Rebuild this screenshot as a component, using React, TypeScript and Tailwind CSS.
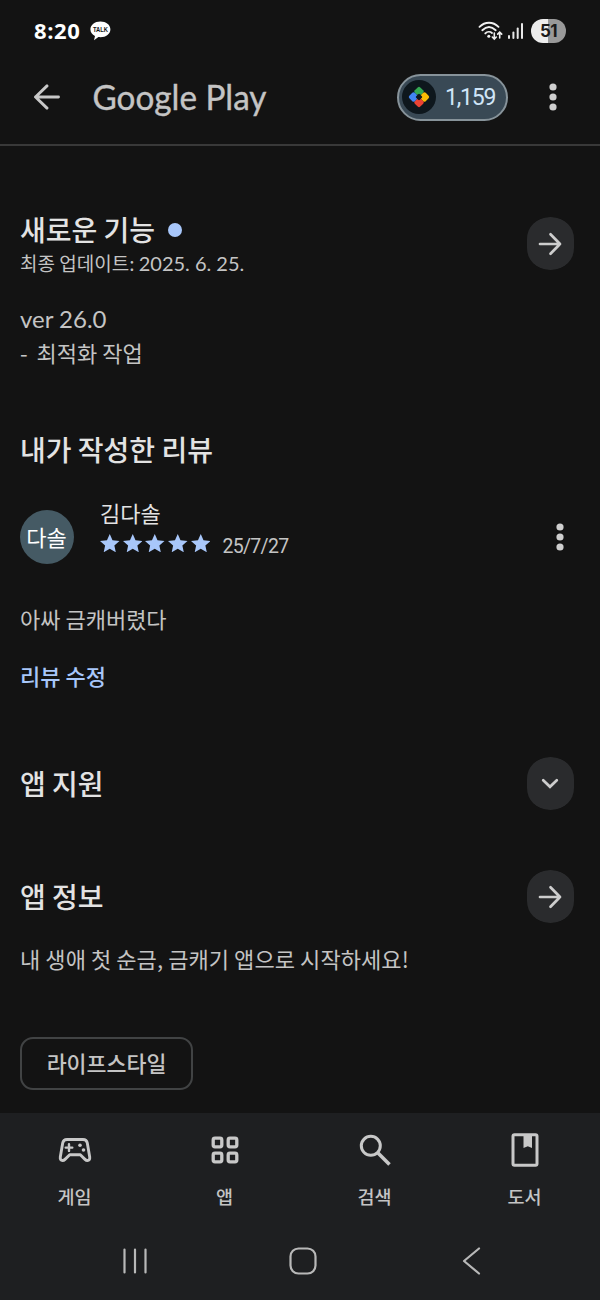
import type { ReactNode } from "react";

const GOOGLE_TEXT = "font-['Lato','Noto_Sans_CJK_KR',sans-serif]";

function MoreDots() {
  return (
    <svg width="8" height="28" viewBox="0 0 8 28" fill="#cfcfcf">
      <circle cx="4" cy="4" r="3.6" />
      <circle cx="4" cy="14" r="3.6" />
      <circle cx="4" cy="24" r="3.6" />
    </svg>
  );
}

function RoundButton({ children }: { children: ReactNode }) {
  return (
    <button className="flex h-[53px] w-[47px] shrink-0 items-center justify-center overflow-hidden rounded-[22px]">
      <span className="flex size-[53px] shrink-0 items-center justify-center rounded-full bg-[#2a2b2d]">
        {children}
      </span>
    </button>
  );
}

function ArrowRight() {
  return (
    <svg className="mr-px" width="24" height="24" viewBox="0 0 24 24" fill="none" stroke="#cdcdcd" strokeWidth="2.7" strokeLinecap="round" strokeLinejoin="round">
      <path d="M2 12H22M12.500 2.2L22 12L12.500 21.8" />
    </svg>
  );
}

function ChevronDown() {
  return (
    <svg className="mr-px" width="18" height="12" viewBox="0 0 18 12" fill="none" stroke="#cdcdcd" strokeWidth="2.7" strokeLinecap="round">
      <path d="M2.2 2.2L9 8.8L15.8 2.2" />
    </svg>
  );
}

function StatusBar() {
  return (
    <div className="flex h-[50px] items-center justify-between pt-3 pr-[34px] pl-[34px]">
      <div className="flex items-center gap-[8px]">
        <span className="w-12 pb-0.5 font-['Open_Sans',sans-serif] text-[22px] leading-none font-bold tracking-[0.6px] text-white">8:20</span>
        <svg width="21" height="20" viewBox="0 0 21 20">
          <path d="M10.4 .4C4.8 .4 .4 3.8 .4 8.2c0 3 1.8 5.4 4.6 6.800l-1 4.300 4.400-3.200c.7.1 1.300.1 2 .1 5.600 0 10-3.500 10-8S16 .4 10.400 .4z" fill="#fff" />
          <text x="10.500" y="10.700" textAnchor="middle" textLength="15" lengthAdjust="spacingAndGlyphs" fontFamily="Liberation Sans" fontWeight="700" fontSize="6.300" fill="#131313">TALK</text>
        </svg>
      </div>
      <div className="flex items-center">
        <svg width="26" height="20" viewBox="0 0 26 20" fill="none" stroke="#f0f0f0" strokeLinecap="round">
          <path d="M1.500 5.800C7 .3 15 .3 20.500 5.800M4.300 9.200C8.500 5.200 13.500 5.200 17.700 9.200M7.300 12.400C9.300 10.400 12.200 10.400 14 11.900" strokeWidth="1.900" />
          <circle cx="10.800" cy="15.300" r="1.500" fill="#f0f0f0" stroke="none" />
          <path d="M16.300 12V17.800M14.300 16l2 2 2-2M21.700 17V11.300M19.700 13.100l2-2 2 2" strokeWidth="1.600" />
        </svg>
        <svg className="ml-[3px]" width="17" height="18" viewBox="0 0 17 18" fill="#e8e8e8">
          <rect x="1" y="13" width="2" height="4" rx="1" />
          <rect x="5.400" y="9.500" width="2" height="7.500" rx="1" />
          <rect x="9.700" y="5.500" width="2" height="11.500" rx="1" />
          <rect x="14" y="1" width="2" height="16" rx="1" />
        </svg>
        <div className="ml-[7px] flex h-6 w-[35px] items-center justify-center rounded-full bg-linear-to-r from-[#ededed] from-50% to-[#999] to-50%">
          <span className="font-['Inter',sans-serif] text-[17px] leading-none font-bold tracking-[-0.5px] text-[#1a1a1a]">51</span>
        </div>
      </div>
    </div>
  );
}

function Header() {
  return (
    <header className="flex h-24 items-center border-b-2 border-[#393939] pl-[33px] pr-[43px]">
      <svg width="28" height="26" viewBox="0 0 28 26" fill="none" stroke="#c8c8c8" strokeWidth="2.900" strokeLinecap="round" strokeLinejoin="round">
        <path d="M25.500 13H2.500M14 1.900L2.500 13L14 24.100" />
      </svg>
      <svg className="ml-[28px] overflow-visible" width="190" height="70" viewBox="0 0 190 70">
        <text x="3.500" y="47.500" textLength="174" lengthAdjust="spacingAndGlyphs" fontFamily="Lato" fontWeight="400" fontSize="35.500" fill="#c4c4c4" stroke="#c4c4c4" strokeWidth=".4">Google Play</text>
      </svg>
      <div className="ml-auto flex h-[47px] w-[111px] items-center rounded-full border-2 border-[#87939a] bg-[#394955] pl-[3px]">
        <svg width="34" height="34" viewBox="0 0 34 34">
          <circle cx="17" cy="17" r="17" fill="#0e171d" />
          <g transform="translate(17 17) rotate(45)">
            <rect x="-7.700" y="-7.700" width="7.700" height="7.700" rx="1.800" fill="#34a853" />
            <rect x="0" y="-7.700" width="7.700" height="7.700" rx="1.800" fill="#fbbc04" />
            <rect x="0" y="0" width="7.700" height="7.700" rx="1.800" fill="#ea4335" />
            <rect x="-7.700" y="0" width="7.700" height="7.700" rx="1.800" fill="#4285f4" />
            <rect x="-2.600" y="-2.600" width="5.200" height="5.200" rx="1.200" fill="#0e171d" />
          </g>
        </svg>
        <span className="ml-[9px] font-['Roboto',sans-serif] text-[23px] leading-none tracking-[-1.200px] text-[#cfe5f8]">1,159</span>
      </div>
      <div className="ml-[41px] flex">
        <MoreDots />
      </div>
    </header>
  );
}

function Heading({ children }: { children: ReactNode }) {
  return <h2 className="text-[28px] leading-[38px] font-medium text-[#e3e3e3]">{children}</h2>;
}

function Star() {
  return (
    <svg width="19.500" height="18.500" viewBox="0 0 19 18" fill="#a8c7fa">
      <path d="M9.500 0L12.200 6.100L19 6.800L14 11.200L15.400 17.800L9.500 14.300L3.600 17.800L5 11.200L0 6.800L6.800 6.100z" />
    </svg>
  );
}

function NavItem({ label, children }: { label: string; children: ReactNode }) {
  return (
    <div className="flex flex-1 flex-col items-center">
      <div className="flex h-9 items-center justify-center">{children}</div>
      <span className="mt-[14px] pr-px text-[18.500px] leading-7 font-medium text-[#c4c4c4]">{label}</span>
    </div>
  );
}

function BottomNav() {
  return (
    <nav className="flex h-[187px] shrink-0 flex-col bg-[#1e1f21] pt-[19px]">
      <div className="flex h-[79px] shrink-0">
        <NavItem label="게임">
          <svg width="34" height="26" viewBox="0 0 34 26" fill="none" stroke="#c8c8c8" strokeLinejoin="round" strokeLinecap="round">
            <path d="M9 2.500H25C27.500 2.500 28.900 3.800 29.300 6L31.700 20C32 22.500 31 23.500 29.500 23.500C28.500 23.500 27.800 23.200 27 22.400L22.300 17.800H11.700L7 22.400C6.200 23.200 5.500 23.500 4.500 23.500C3 23.500 2 22.500 2.300 20L4.700 6C5.100 3.800 6.500 2.500 9 2.500z" strokeWidth="2.900" />
            <path d="M11 7.300V13.900M7.700 10.600H14.300" strokeWidth="2.400" />
            <circle cx="22" cy="8.200" r="1.800" fill="#c8c8c8" stroke="none" />
            <circle cx="25.500" cy="13" r="1.800" fill="#c8c8c8" stroke="none" />
          </svg>
        </NavItem>
        <NavItem label="앱">
          <svg width="28" height="28" viewBox="0 0 28 28" fill="none" stroke="#c8c8c8" strokeWidth="3.300">
            <rect x="2.200" y="2.200" width="8.600" height="8.600" rx="1.800" />
            <rect x="17.200" y="2.200" width="8.600" height="8.600" rx="1.800" />
            <rect x="2.200" y="17.200" width="8.600" height="8.600" rx="1.800" />
            <rect x="17.200" y="17.200" width="8.600" height="8.600" rx="1.800" />
          </svg>
        </NavItem>
        <NavItem label="검색">
          <svg width="32" height="32" viewBox="0 0 32 32" fill="none" stroke="#c8c8c8">
            <circle cx="11.800" cy="11.800" r="9.500" strokeWidth="3" />
            <path d="M18.500 18.500L30.500 30.500" strokeWidth="3.600" />
          </svg>
        </NavItem>
        <NavItem label="도서">
          <svg width="28" height="34" viewBox="0 0 28 34" fill="none">
            <rect x="2" y="1.800" width="24" height="30.500" rx="1.500" stroke="#c8c8c8" strokeWidth="3" />
            <path d="M12.500 2H21V15L16.800 13.200L12.500 15z" fill="#c8c8c8" />
          </svg>
        </NavItem>
      </div>
      <div className="flex h-[89px] shrink-0 items-center pt-[10px] pl-[122px]">
        <svg width="26" height="26" viewBox="0 0 26 26" stroke="#b8b8b8" strokeWidth="2.200" strokeLinecap="round">
          <path d="M2.500 1.500V24.500M13 1.500V24.500M23.500 1.500V24.500" />
        </svg>
        <svg className="ml-[141px]" width="28" height="28" viewBox="0 0 28 28" fill="none" stroke="#b8b8b8" strokeWidth="2.200">
          <rect x="1.500" y="1.500" width="25" height="25" rx="8" />
        </svg>
        <svg className="ml-[145px]" width="19" height="28" viewBox="0 0 19 28" fill="none" stroke="#b8b8b8" strokeWidth="2.200" strokeLinecap="round" strokeLinejoin="round">
          <path d="M17 1.500L2 14L17 26.500" />
        </svg>
      </div>
    </nav>
  );
}

export default function App() {
  return (
    <div className="flex h-[1300px] w-[600px] flex-col overflow-hidden bg-[#131313] font-['Noto_Sans_CJK_KR',sans-serif]">
      <StatusBar />
      <Header />
      <main className="flex grow flex-col pt-[64px] pr-[26px] pl-5">
        <section className="h-[220px]">
          <div className="flex items-start justify-between">
            <div>
              <div className="flex h-[38px] items-center gap-[13px]">
                <Heading>새로운 기능</Heading>
                <span className="mt-0.5 size-[14px] rounded-full bg-[#a8c7fa]" />
              </div>
              <p className="text-[19px] leading-[30px] text-[#c4c4c4]">
                최종 업데이트: <span className={`${GOOGLE_TEXT} text-[20px]`}>2025. 6. 25.</span>
              </p>
            </div>
            <div className="mt-[7px]">
              <RoundButton><ArrowRight /></RoundButton>
            </div>
          </div>
          <div className="mt-6 text-[22px] leading-[34px] text-[#c4c4c4]">
            <p className={`${GOOGLE_TEXT} text-[24px]`}>ver 26.0</p>
            <p className="-mt-px"><span className="mr-1">-</span> 최적화 작업</p>
          </div>
        </section>

        <section className="h-[327px]">
          <Heading>내가 작성한 리뷰</Heading>
          <div className="mt-[31px] flex h-[66px] items-start">
            <div className="mt-[11px] flex size-[54px] items-center justify-center rounded-full bg-[#455a64] pr-px pb-[3px] text-[22px] leading-none text-white">다솔</div>
            <div className="ml-[26px]">
              <p className="-mt-0.5 text-[22px] leading-[30px] text-[#e3e3e3]">김다솔</p>
              <div className="flex h-8 items-center gap-[3.200px]">
                <Star /><Star /><Star /><Star /><Star />
                <span className="ml-[9px] pt-[7px] font-['Roboto',sans-serif] text-[19.500px] leading-7 tracking-[-0.700px] text-[#c4c4c4]">25/7/27</span>
              </div>
            </div>
            <div className="mt-6 mr-[10px] ml-auto flex">
              <MoreDots />
            </div>
          </div>
          <p className="mt-[36px] text-[22px] leading-[34px] text-[#c4c4c4]">아싸 금캐버렸다</p>
          <p className="mt-[23px] text-[22px] leading-[34px] font-medium text-[#a8c7fa]">리뷰 수정</p>
        </section>

        <section className="flex h-[53px] items-center justify-between">
          <div className="pb-0.5"><Heading>앱 지원</Heading></div>
          <RoundButton><ChevronDown /></RoundButton>
        </section>

        <section className="mt-[60px]">
          <div className="flex h-[53px] items-center justify-between">
            <div className="pb-0.5"><Heading>앱 정보</Heading></div>
            <RoundButton><ArrowRight /></RoundButton>
          </div>
          <p className="mt-[18px] text-[22px] leading-[34px] tracking-[0.080px] text-[#c4c4c4]">내 생애 첫 순금, 금캐기 앱으로 시작하세요!</p>
          <button className="mt-[62px] flex h-[53px] w-[173px] items-center justify-center rounded-[13px] border-2 border-[#414344] pb-0.5 text-[21.700px] leading-none font-medium text-[#c4c4c4]">
            라이프스타일
          </button>
        </section>
      </main>
      <BottomNav />
    </div>
  );
}
